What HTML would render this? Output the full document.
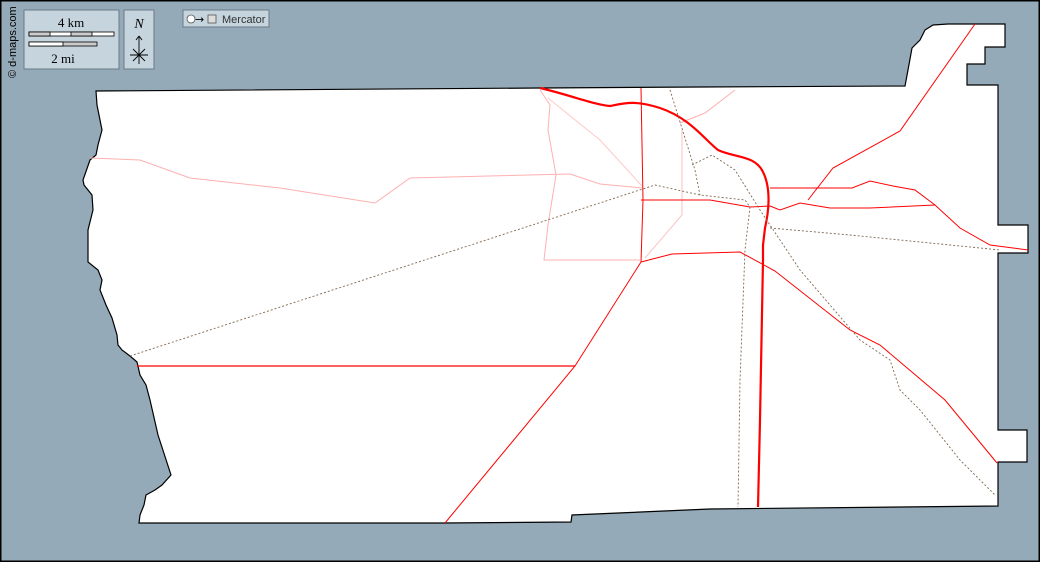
<!DOCTYPE html>
<html><head><meta charset="utf-8"><style>
html,body{margin:0;padding:0;background:#94aab8;}
svg{display:block}
</style></head><body>
<svg width="1040" height="562" viewBox="0 0 1040 562" xmlns="http://www.w3.org/2000/svg" font-family="Liberation Serif, serif">
<rect x="0" y="0" width="1040" height="562" fill="#94aab8"/>
<rect x="0.5" y="0.5" width="1039" height="561" fill="none" stroke="#000" stroke-width="2"/>
<polygon fill="#fff" stroke="#000" stroke-width="1.2" points="96,91 540,88 700,87 905,86 908,70 912,48 920,40 925,30 933,25 948,24 1005,24 1005,47 985,47 985,64 967,64 967,85 998,85 998,225 1028,225 1028,253 998,253 998,430 1027,430 1027,462 998,462 998,506 710,509 572,515 571,522 444,523 139,523 140,515 144,505 146,495 155,490 162,485 171,475 158,435 150,400 146,385 140,375 137,362 130,356 122,350 118,345 117,335 112,318 106,305 100,290 102,280 98,270 88,262 88,230 93,210 92,195 84,185 83,180 90,160 96,155 98,145 102,130 97,105"/>
<g fill="none">
<path d="M90,158 L140,160 L190,178 L280,188 L375,203 L410,178 L570,174 L600,184 L642,188" stroke="#ffb0b0" stroke-width="1"/>
<path d="M540,90 L550,105 L548,130 L556,175 L548,225 L544,260 L640,260" stroke="#ffb0b0" stroke-width="1"/>
<path d="M548,98 L600,140 L642,186" stroke="#ffc8c8" stroke-width="1"/>
<path d="M680,123 L705,113 L735,90" stroke="#ffb0b0" stroke-width="1"/>
<path d="M682,130 L682,215 L645,258" stroke="#ffc0c0" stroke-width="1"/>
<path d="M540,88 C570,95 595,105 610,106 C625,103 635,100 660,108 C690,118 705,140 718,150 C735,158 755,155 763,172 C772,190 768,215 765,228 L763,245 L763,260 L760,420 L758,507" stroke="#f00" stroke-width="2.2"/>
<path d="M641,88 L643,200 L641,262" stroke="#f00" stroke-width="1"/>
<path d="M641,200 L710,200 L750,207 L770,206 L780,210 L800,203 L830,208 L870,208 L935,205" stroke="#f00" stroke-width="1"/>
<path d="M770,188 L852,188 L870,181 L893,186 L915,190 L935,205 L960,228 L990,245 L1028,250" stroke="#f00" stroke-width="1"/>
<path d="M808,200 L833,168 L900,131 L975,24" stroke="#f00" stroke-width="1"/>
<path d="M641,262 L672,254 L740,252 L775,271 L850,330 L880,345 L945,400 L997,463" stroke="#f00" stroke-width="1"/>
<path d="M641,262 L575,366 L445,523" stroke="#f00" stroke-width="1"/>
<path d="M137,366 L575,366" stroke="#f00" stroke-width="1.2"/>
<g stroke="#806850" stroke-width="0.9" stroke-dasharray="2,2">
<path d="M130,356 L655,185 L700,195 L745,200 L750,207 L745,250 L740,380 L738,507"/>
<path d="M670,90 L695,170 L700,195"/>
<path d="M692,165 L712,155 L735,170 L760,210 L800,270 L860,340 L890,360 L900,390 L920,410 L960,460 L995,495"/>
<path d="M770,228 L850,235 L1000,250"/>
</g>
</g>
<rect x="24" y="10" width="95" height="59" fill="#c5d4dd" stroke="#6a7a86"/>
<text x="71" y="27" font-size="13" text-anchor="middle">4 km</text>
<rect x="29" y="32" width="85" height="4" fill="#fff" stroke="#000" stroke-width="0.8"/>
<rect x="29" y="32" width="21" height="4" fill="#ccc" stroke="#000" stroke-width="0.8"/>
<rect x="71" y="32" width="21" height="4" fill="#ccc" stroke="#000" stroke-width="0.8"/>
<rect x="29" y="42" width="68" height="4" fill="#ccc" stroke="#000" stroke-width="0.8"/>
<rect x="29" y="42" width="34" height="4" fill="#fff" stroke="#000" stroke-width="0.8"/>
<text x="63" y="63" font-size="13" text-anchor="middle">2 mi</text>
<rect x="124" y="10" width="30" height="59" fill="#c5d4dd" stroke="#6a7a86"/>
<text x="139" y="28" font-size="14" font-style="italic" text-anchor="middle">N</text>
<g stroke="#000" stroke-width="0.9"><line x1="139" y1="36" x2="139" y2="64"/><line x1="136" y1="40" x2="139" y2="36"/><line x1="142" y1="40" x2="139" y2="36"/><line x1="130" y1="55" x2="148" y2="55"/><line x1="133" y1="49" x2="145" y2="61"/><line x1="145" y1="49" x2="133" y2="61"/></g>
<text transform="translate(16,78) rotate(-90)" font-family="Liberation Sans, sans-serif" font-size="11">© d-maps.com</text>
<rect x="183" y="10" width="86" height="17" fill="#c5d4dd" stroke="#6a7a86"/>
<circle cx="191" cy="19" r="4" fill="#fff" stroke="#555" stroke-width="0.8"/>
<text x="195" y="23" font-size="11" font-family="DejaVu Sans, sans-serif">→</text>
<rect x="208" y="15" width="8" height="8" fill="#ddd" stroke="#555" stroke-width="0.8"/>
<text x="222" y="23" font-family="Liberation Sans, sans-serif" font-size="11" fill="#333">Mercator</text>
</svg>
</body></html>
